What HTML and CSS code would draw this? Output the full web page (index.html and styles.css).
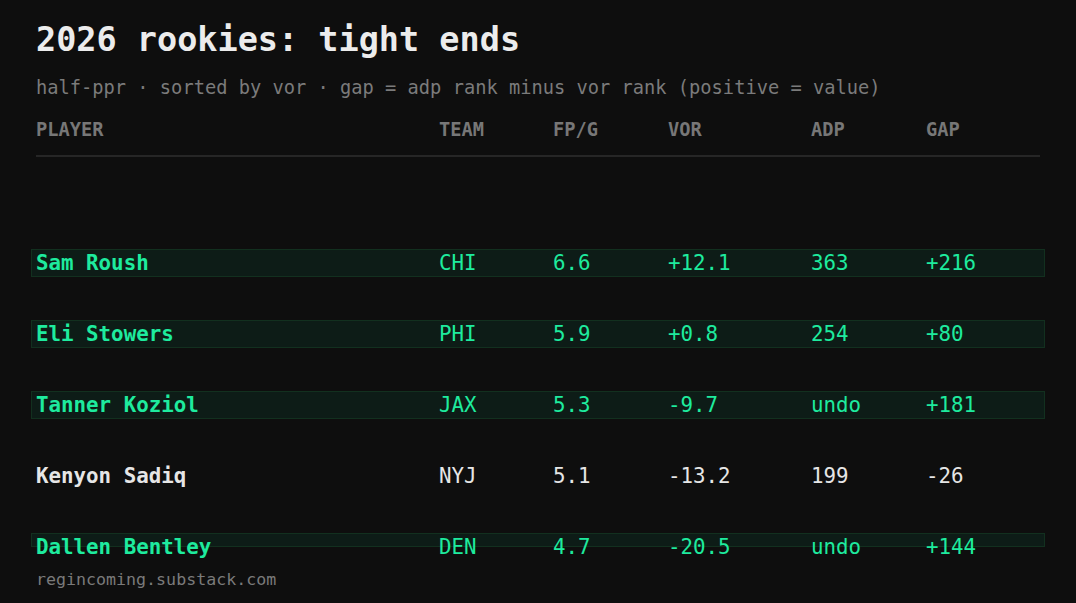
FILE: index.html
```html
<!DOCTYPE html>
<html lang="en">
<head>
<meta charset="utf-8">
<title>2026 rookies: tight ends</title>
<link rel="stylesheet" href="styles.css">
</head>
<body>
<main class="page">
  <h1 class="title">2026 rookies: tight ends</h1>
  <p class="subtitle">half-ppr · sorted by vor · gap = adp rank minus vor rank (positive = value)</p>
  <div class="table">
    <div class="head cols">
      <span>PLAYER</span><span>TEAM</span><span>FP/G</span><span>VOR</span><span>ADP</span><span>GAP</span>
    </div>
    <div class="body">
      <div class="row cols hl"><span class="name">Sam Roush</span><span>CHI</span><span>6.6</span><span>+12.1</span><span>363</span><span>+216</span></div>
      <div class="row cols hl"><span class="name">Eli Stowers</span><span>PHI</span><span>5.9</span><span>+0.8</span><span>254</span><span>+80</span></div>
      <div class="row cols hl"><span class="name">Tanner Koziol</span><span>JAX</span><span>5.3</span><span>-9.7</span><span>undo</span><span>+181</span></div>
      <div class="row cols"><span class="name">Kenyon Sadiq</span><span>NYJ</span><span>5.1</span><span>-13.2</span><span>199</span><span>-26</span></div>
      <div class="row cols hl"><span class="name">Dallen Bentley</span><span>DEN</span><span>4.7</span><span>-20.5</span><span>undo</span><span>+144</span></div>
    </div>
  </div>
  <footer class="foot">regincoming.substack.com</footer>
</main>
</body>
</html>
```

FILE: styles.css
```css
html, body {
  margin: 0;
  padding: 0;
  background: #0e0e0e;
}
body {
  font-family: "DejaVu Sans Mono", "Liberation Mono", monospace;
  color: #e8e8e8;
}
.page {
  width: 1076px;
  height: 603px;
  box-sizing: border-box;
  padding: 20px 36px 0 36px;
  overflow: hidden;
}
.title {
  margin: 0;
  font-size: 33.5px;
  line-height: 39px;
  font-weight: bold;
  color: #ececec;
}
.subtitle {
  margin: 18px 0 0 0;
  font-size: 18.72px;
  line-height: 22px;
  color: #7b7b7b;
}
.table {
  margin-top: 20px;
}
.cols {
  display: grid;
  grid-template-columns: 403px 114px 115px 143px 115px 1fr;
}
.head {
  font-size: 18.72px;
  line-height: 22px;
  font-weight: bold;
  color: #777777;
  padding-bottom: 14px;
  border-bottom: 2px solid #262626;
}
.body {
  margin-top: 92px;
  height: 298px;
  display: grid;
  grid-template-rows: repeat(4, 28px) minmax(0, 1fr);
  row-gap: 43px;
}
.row {
  margin: 0 -5px;
  padding: 0 4px;
  border: 1px solid transparent;
  box-sizing: border-box;
  font-size: 20.8px;
  line-height: 26px;
  color: #e6e6e6;
  min-height: 0;
}
.row.hl {
  background: #0d1c17;
  border-color: #12301f;
  color: #1eeb9e;
}
.name {
  font-weight: bold;
}
.foot {
  margin-top: 23px;
  font-size: 16.64px;
  line-height: 20px;
  color: #7a7a7a;
}
```
